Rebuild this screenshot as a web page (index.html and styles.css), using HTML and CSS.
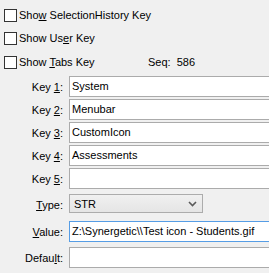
FILE: index.html
```html
<!DOCTYPE html>
<html lang="en">
<head>
    <meta charset="UTF-8">
    <title>Key Settings</title>
    <link rel="stylesheet" href="styles.css">
</head>
<body>

<div class="panel">
    <div class="checks">
        <label class="check"><span class="box"></span><span>Sho<u>w</u> SelectionHistory Key</span></label>
        <label class="check"><span class="box"></span><span>Show Us<u>e</u>r Key</span></label>
        <div class="tabs-row">
            <label class="check"><span class="box"></span><span>Show <u>T</u>abs Key</span></label>
            <span class="seq">Seq:&nbsp; 586</span>
        </div>
    </div>

    <div class="keys">
        <label class="lbl">Key <u>1</u>:</label>
        <div class="field">System</div>
        <label class="lbl">Key <u>2</u>:</label>
        <div class="field">Menubar</div>
        <label class="lbl">Key <u>3</u>:</label>
        <div class="field">CustomIcon</div>
        <label class="lbl">Key <u>4</u>:</label>
        <div class="field">Assessments</div>
        <label class="lbl">Key <u>5</u>:</label>
        <div class="field"></div>
    </div>

    <div class="props">
        <label class="lbl"><u>T</u>ype:</label>
        <div class="select">
            <span>STR</span>
            <svg width="9" height="6" viewBox="0 0 9 6"><path d="M1 1 L4.5 4.5 L8 1" fill="none" stroke="#5a5a5a" stroke-width="1.6"/></svg>
        </div>
        <label class="lbl"><u>V</u>alue:</label>
        <div class="field focus">Z:\Synergetic\\Test icon - Students.gif</div>
        <label class="lbl">Defau<u>l</u>t:</label>
        <div class="field"></div>
    </div>
</div>

</body>
</html>
```

FILE: styles.css
```css
body {
    margin: 0;
    background-color: #f0f0f0;
    font-family: "Liberation Sans", Arial, sans-serif;
    font-size: 11px;
    color: #000;
    overflow: hidden;
}
.panel {
    width: 269px;
    height: 273px;
}
u {
    text-decoration-thickness: 1px;
    text-underline-offset: 1px;
}
.checks {
    padding: 9px 0 0 4px;
    display: flex;
    flex-direction: column;
    gap: 10px;
}
.check {
    display: flex;
    align-items: center;
    gap: 2px;
    height: 13px;
    line-height: 13px;
    white-space: nowrap;
}
.box {
    width: 11px;
    height: 11px;
    border: 1px solid #333;
    background-color: #fff;
}
.tabs-row {
    display: grid;
    grid-template-columns: 144px auto;
    align-items: center;
}
.seq {
    line-height: 13px;
    margin-top: 1px;
}
.keys,
.props {
    display: grid;
    grid-template-columns: 63px 205px;
    column-gap: 6px;
    align-items: center;
}
.keys {
    margin-top: 7px;
    row-gap: 2px;
}
.props {
    margin-top: 5px;
    row-gap: 5px;
}
.lbl {
    text-align: right;
    white-space: nowrap;
}
.type-lbl {
    align-self: start;
}
.field {
    box-sizing: border-box;
    height: 21px;
    border: 1px solid #ababab;
    background-color: #fff;
    padding: 0 2px;
    line-height: 19px;
    white-space: nowrap;
    overflow: hidden;
}
.field.focus {
    border-color: #569de5;
}
.select {
    box-sizing: border-box;
    width: 134px;
    height: 19px;
    margin-bottom: 3px;
    border: 1px solid #acacac;
    background: linear-gradient(#f0f0f0, #e5e5e5);
    display: flex;
    align-items: center;
    justify-content: space-between;
    padding: 0 5px 0 4px;
}
```
